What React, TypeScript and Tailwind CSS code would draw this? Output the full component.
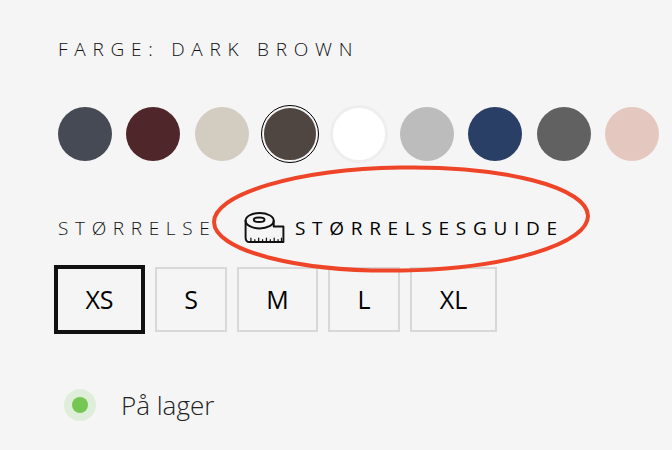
import React from 'react';

const colors = [
  { hex: 'bg-[#464a54]' },
  { hex: 'bg-[#4f272b]' },
  { hex: 'bg-[#d3ccc0]' },
  { hex: 'bg-[#4f4541]', active: true },
  { hex: 'bg-white', light: true },
  { hex: 'bg-[#bcbcbc]' },
  { hex: 'bg-[#2a3f66]' },
  { hex: 'bg-[#616161]' },
  { hex: 'bg-[#e4c7be]' },
];

const sizes = [
  { label: 'XS', width: 'w-[91px]', active: true },
  { label: 'S', width: 'w-[72px]' },
  { label: 'M', width: 'w-[81px]' },
  { label: 'L', width: 'w-[72px]' },
  { label: 'XL', width: 'w-[87px]' },
];

const TapeIcon = () => (
  <svg width="41" height="32" viewBox="0 0 42 33" fill="none" stroke="#111" strokeWidth="2" strokeLinejoin="round" strokeLinecap="round">
    <ellipse cx="16" cy="9" rx="14.5" ry="8" />
    <ellipse cx="15.5" cy="8" rx="5.5" ry="2.4" />
    <path d="M1.5 9v17c0 3 1.5 5 4 5h35V15H30.5V9" />
    <path d="M7 31v-4M11 31v-2.5M15 31v-4M19 31v-2.5M23 31v-4M27 31v-2.5M31 31v-4M35 31v-2.5M38.5 31v-4" strokeWidth="1.3" />
  </svg>
);

const App: React.FC = () => {
  return (
    <div className="relative w-[672px] h-[450px] overflow-hidden bg-[#f5f5f5] pl-[58px] pt-[37px] font-['Open_Sans',sans-serif] text-[#111]">
      <div className="text-[19px] leading-6 font-light tracking-[6.75px] text-[#111]">FARGE: DARK BROWN</div>

      <div className="flex gap-[14.4px] mt-[46px] w-[640px]">
        {colors.map((color, i) => (
          <div
            key={i}
            className={`shrink-0 rounded-full ${color.hex} ${
              color.active
                ? 'w-[58px] h-[58px] -m-[2px] border-[3px] border-[#f5f5f5] outline-[1.5px] outline-solid outline-black -outline-offset-[1.5px]'
                : color.light
                  ? 'w-[58px] h-[58px] -m-[2px] border-[3px] border-[#eeeeee]'
                  : 'w-[54px] h-[54px]'
            }`}
          />
        ))}
      </div>

      <div className="flex items-center mt-[47px] h-[40px]">
        <span className="text-[19px] font-light tracking-[6.65px] text-[#111] w-[186px]">STØRRELSE</span>
        <TapeIcon />
        <span className="ml-[10px] text-[19px] font-medium tracking-[6.7px] text-black">STØRRELSESGUIDE</span>
      </div>

      <div className="flex items-center gap-[10px] mt-[17px] -ml-[4px]">
        {sizes.map((size) => (
          <div
            key={size.label}
            className={`flex items-center justify-center text-[25px] text-black ${size.width} ${
              size.active ? 'h-[69px] border-4 border-[#111]' : 'h-[65px] border-2 border-[#d8d8d8]'
            }`}
          >
            {size.label}
          </div>
        ))}
      </div>

      <div className="flex items-center mt-[55px] ml-[6px]">
        <div className="flex items-center justify-center w-[32px] h-[32px] rounded-full bg-[#dfeeda]">
          <div className="w-[16px] h-[16px] rounded-full bg-[#76c653]" />
        </div>
        <span className="ml-[25px] text-[26px] font-light leading-8 text-[#222]">På lager</span>
      </div>

      <svg className="absolute left-0 top-0 pointer-events-none" width="672" height="450" fill="none">
        <ellipse cx="401" cy="219" rx="187" ry="51.5" stroke="#ee4427" strokeWidth="4" transform="rotate(-1 401 219)" />
      </svg>
    </div>
  );
};

export default App;
